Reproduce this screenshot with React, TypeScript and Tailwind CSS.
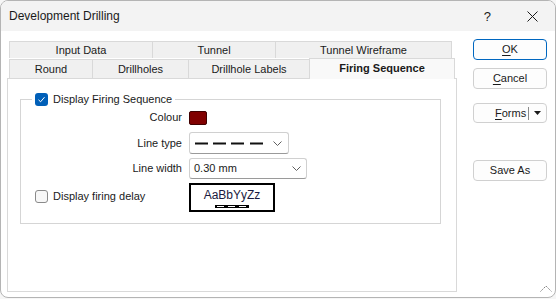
import React from "react";

const font = { fontFamily: '"Liberation Sans", Arial, sans-serif' };

function Check({ checked }: { checked?: boolean }) {
  if (checked) {
    return (
      <span className="flex h-[13px] w-[13px] items-center justify-center rounded-[3px] bg-[#005fb8]">
        <svg width="9" height="9" viewBox="0 0 9 9">
          <path d="M1.5 4.8 L3.6 6.8 L7.5 2.2" fill="none" stroke="white" strokeWidth="1" />
        </svg>
      </span>
    );
  }
  return <span className="h-[13px] w-[13px] rounded-[3px] border border-[#8a8a8a] bg-[#f7f7f7]" />;
}

function Chevron() {
  return (
    <svg width="9" height="5" viewBox="0 0 9 5">
      <path d="M0.5 0.5 L4.5 4.5 L8.5 0.5" fill="none" stroke="#5f5f5f" strokeWidth="1" />
    </svg>
  );
}

function Btn({ children, primary }: { children: React.ReactNode; primary?: boolean }) {
  return (
    <div
      className={
        "flex h-[21px] w-[74px] items-center justify-center rounded-[4px] border bg-[#fdfdfd] " +
        (primary ? "border-[#0067c0]" : "border-[#d0d0d0]")
      }
    >
      {children}
    </div>
  );
}

export default function App() {
  const topTabs = [
    { label: "Input Data", w: "w-[143px]" },
    { label: "Tunnel", w: "w-[123px]" },
    { label: "Tunnel Wireframe", w: "w-[177px]" },
  ];
  const bottomTabs = [
    { label: "Round", w: "w-[83px]" },
    { label: "Drillholes", w: "w-[96px]" },
    { label: "Drillhole Labels", w: "w-[121px]" },
  ];

  return (
    <div className="h-[299px] w-[556px] bg-[#f6f6f6]" style={font}>
      <div className="flex h-[298px] w-[556px] flex-col overflow-hidden rounded-[8px] border border-[#b4b4b4] bg-white text-[11px] leading-[15px] text-[#1a1a1a]">
        {/* title bar */}
        <div className="flex h-[30px] shrink-0 items-center bg-[#f3f3f3] pl-[8px] text-[12px]">
          <span className="flex-1">Development Drilling</span>
          <span className="mr-[36px] text-[13px]">?</span>
          <svg className="mr-[17px]" width="11" height="11" viewBox="0 0 11 11">
            <path d="M0.5 0.5 L10.5 10.5 M10.5 0.5 L0.5 10.5" stroke="#1a1a1a" strokeWidth="1" />
          </svg>
        </div>

        <div className="flex flex-1">
          {/* tab area */}
          <div className="flex w-[457px] flex-col pl-[6px] pt-[10px]">
            <div className="flex pl-[2px]">
              {topTabs.map((t) => (
                <div
                  key={t.label}
                  className={
                    "flex h-[17px] items-center justify-center border-l border-t border-[#d9d9d9] bg-[#f0f0f0] last:border-r " +
                    t.w
                  }
                >
                  {t.label}
                </div>
              ))}
            </div>
            <div className="flex items-end pl-[2px]">
              {bottomTabs.map((t) => (
                <div
                  key={t.label}
                  className={
                    "flex h-[19px] items-center justify-center border-l border-t border-[#d9d9d9] bg-[#f0f0f0] " +
                    t.w
                  }
                >
                  {t.label}
                </div>
              ))}
              <div className="relative z-10 -mb-px flex h-[21px] w-[146px] items-center justify-center border-x border-t border-[#d9d9d9] bg-[#f9f9f9] pb-[2px] font-bold">
                Firing Sequence
              </div>
            </div>

            {/* panel */}
            <div className="h-[214px] w-[450px] border border-[#d9d9d9] bg-white pl-[12px] pt-[13px]">
              <fieldset className="h-[132px] w-[421px] border border-[#d5d5d5]">
                <legend className="ml-[11px] flex items-center gap-[5px] px-[3px]">
                  <Check checked />
                  <span>Display Firing Sequence</span>
                </legend>
                <div className="mt-[3px] grid grid-cols-[161px_1fr] items-center gap-x-[7px]">
                  <span className="text-right">Colour</span>
                  <span className="h-[14px] w-[18px] rounded-[2px] border border-[#400000] bg-[#800000]" />

                  <span className="mt-[7px] text-right">Line type</span>
                  <div className="mt-[7px] flex h-[22px] w-[100px] items-center justify-between rounded-[3px] border border-[#d0d0d0] border-b-[#9a9a9a] bg-white pl-[5px] pr-[6px]">
                    <svg width="70" height="3" viewBox="0 0 70 3">
                      <path d="M0 1.5 H13 M18 1.5 H31 M36 1.5 H49 M55 1.5 H68" stroke="#111" strokeWidth="2" />
                    </svg>
                    <Chevron />
                  </div>

                  <span className="mt-[4px] text-right">Line width</span>
                  <div className="mt-[4px] flex h-[21px] w-[118px] items-center justify-between rounded-[3px] border border-[#d0d0d0] border-b-[#9a9a9a] bg-white pl-[4px] pr-[5px]">
                    <span>0.30 mm</span>
                    <Chevron />
                  </div>

                  <div className="mt-[4px] flex items-center gap-[5px] self-start pl-[14px] pt-[6px]">
                    <Check />
                    <span>Display firing delay</span>
                  </div>
                  <div className="mt-[4px] flex h-[29px] w-[86px] flex-col items-center justify-center border-2 border-black bg-white pt-[1px]">
                    <span className="text-[12px] leading-[13px] text-[#1a1a40]">AaBbYyZz</span>
                    <svg className="mt-[3px]" width="34" height="3" viewBox="0 0 34 3">
                      <rect x="0" y="0" width="34" height="3" fill="#000" />
                      <path d="M2 1.5 H9 M13 1.5 H20 M24 1.5 H31" stroke="#fff" strokeWidth="1" />
                    </svg>
                  </div>
                </div>
              </fieldset>
            </div>
          </div>

          {/* buttons */}
          <div className="relative flex flex-1 flex-col pl-[15px] pt-[8px]">
            <Btn primary>
              <span className="underline underline-offset-2">O</span>K
            </Btn>
            <div className="mt-[8px]">
              <Btn>
                <span className="underline underline-offset-2">C</span>ancel
              </Btn>
            </div>
            <div className="mt-[14px] flex h-[20px] w-[74px] items-center rounded-[4px] border border-[#d0d0d0] bg-[#fdfdfd]">
              <span className="flex-1 pl-[21px]">
                <span className="underline underline-offset-2">F</span>orms
              </span>
              <span className="h-[13px] w-px bg-[#8a8a8a]" />
              <svg className="mx-[5px]" width="7" height="4" viewBox="0 0 7 4">
                <path d="M0 0 H7 L3.5 4 Z" fill="#1a1a1a" />
              </svg>
            </div>
            <div className="mt-[37px]">
              <Btn>Save As</Btn>
            </div>
            <svg className="absolute bottom-[5px] right-[3px]" width="12" height="7" viewBox="0 0 12 7">
              <path d="M0.5 6.5 L6 1 L11.5 6.5" fill="none" stroke="#7a7a7a" strokeWidth="1" strokeDasharray="1.5 1" />
            </svg>
          </div>
        </div>
      </div>
    </div>
  );
}
